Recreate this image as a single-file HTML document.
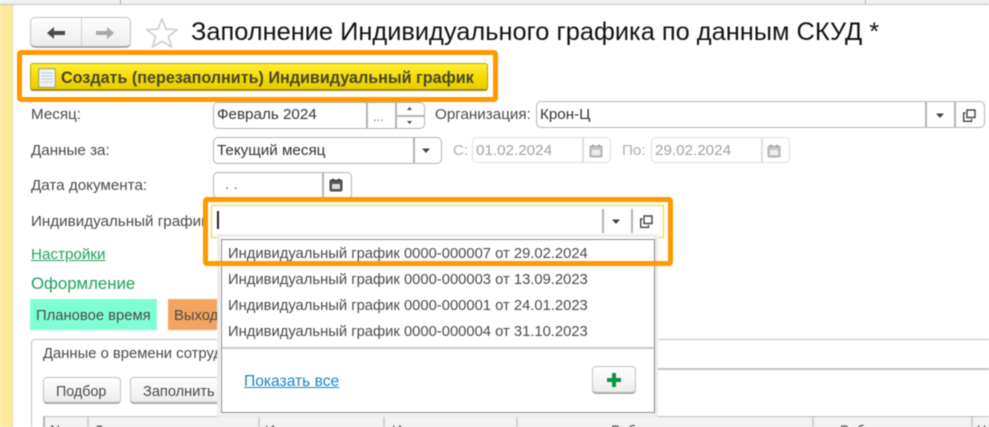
<!DOCTYPE html>
<html lang="ru"><head><meta charset="utf-8"><style>
html,body{margin:0;padding:0;background:#fff;overflow:hidden}
#p{position:relative;width:989px;height:427px;overflow:hidden;background:#fff;font-family:"Liberation Sans",sans-serif;font-size:15.2px;color:#4a4a4a;filter:blur(.45px)}
#p div,#p span.t,#p svg{position:absolute;box-sizing:border-box}
.t{white-space:nowrap;line-height:16px}
.f{border:1.5px solid #b4b4b4;border-radius:5px;background:#fff}
.d{border:1.5px solid #e0e0e0;border-radius:5px;background:#fff}
.v{width:1.5px;background:#b4b4b4}
.b{border:1.5px solid #c4c4c4;border-bottom:2px solid #aaa;border-radius:4px;background:linear-gradient(#fff,#ececec)}
.o{border:5px solid #ff9900;border-radius:4px}
.i{font-size:14.78px}
.h{color:#333;font-size:14px;top:5px}
</style></head><body><div id="p">
<div style="left:0;top:0;width:989px;height:5px;background:#f0f0f0;border-bottom:1.5px solid #c4c4c4"></div>
<div style="left:120px;top:0;width:1px;height:4px;background:#aaa"></div>
<div style="left:865px;top:0;width:1px;height:4px;background:#aaa"></div>
<div style="left:0;top:5px;width:13px;height:422px;background:#fbe99c;border-right:1.5px solid #e3d9a0"></div>

<div class="b" style="left:30px;top:17px;width:101px;height:31px;border-radius:5px"></div>
<div style="left:81px;top:18px;width:1px;height:28px;background:#d2d2d2"></div>
<svg style="left:46px;top:25px" width="20" height="16" viewBox="0 0 20 16"><path d="M1 8 L8 2 V6 H19 V10 H8 V14 Z" fill="#4b4b4b"/></svg>
<svg style="left:95px;top:25px" width="20" height="16" viewBox="0 0 20 16"><path d="M19 8 L12 2 V6 H1 V10 H12 V14 Z" fill="#a8a8a8"/></svg>
<svg style="left:146px;top:17px" width="32" height="32" viewBox="0 0 32 32"><path d="M16 2 L20 12 L31 12.6 L22.4 19.6 L25.4 30 L16 24.2 L6.6 30 L9.6 19.6 L1 12.6 L12 12 Z" fill="#fff" stroke="#c9ced3" stroke-width="1.6"/></svg>
<span class="t" style="left:191px;top:17px;font-size:25.4px;line-height:30px;color:#111">Заполнение Индивидуального графика по данным СКУД *</span>

<div class="o" style="left:17px;top:50px;width:481px;height:52px"></div>
<div style="left:30px;top:63px;width:458px;height:28px;border:1.5px solid #b3a200;border-bottom:2px solid #9c8d10;border-radius:3px;background:linear-gradient(#ffee33,#f5d800 60%,#e9cc00)"></div>
<svg style="left:38px;top:68px" width="18" height="20" viewBox="0 0 18 20"><rect x=".7" y=".7" width="16.6" height="18.6" fill="#eef3f8" stroke="#9b9b80"/><path d="M3 5H15M3 8H15M3 11H15M3 14H15" stroke="#c3ced8" stroke-width="1"/></svg>
<span class="t" style="left:61px;top:70px;font-size:16.15px;font-weight:bold;color:#46462a">Создать (перезаполнить) Индивидуальный график</span>

<span class="t" style="left:31px;top:107px">Месяц:</span>
<div class="f" style="left:213px;top:102px;width:212px;height:27px"></div>
<span class="t" style="left:217px;top:107px;color:#333">Февраль 2024</span>
<div class="v" style="left:366px;top:103px;height:25px"></div>
<div class="v" style="left:395px;top:103px;height:25px"></div>
<div style="left:396px;top:115px;width:28px;height:1.5px;background:#b4b4b4"></div>
<span class="t" style="left:373px;top:109px;font-size:13px;color:#777">...</span>
<svg style="left:405px;top:106px" width="9" height="20" viewBox="0 0 9 20"><path d="M4.5 1 L7 4 H2 Z M2 15 H7 L4.5 18 Z" fill="#444"/></svg>
<span class="t" style="left:435px;top:107px">Организация:</span>
<div class="f" style="left:536px;top:101px;width:449px;height:27px"></div>
<span class="t" style="left:540px;top:107px;color:#333">Крон-Ц</span>
<div class="v" style="left:925px;top:102px;height:25px"></div>
<div class="v" style="left:954px;top:102px;height:25px"></div>
<svg style="left:935px;top:113px" width="10" height="6" viewBox="0 0 10 6"><path d="M1 .5 H9 L5 5 Z" fill="#444"/></svg>
<svg style="left:962px;top:108px" width="15" height="15" viewBox="0 0 15 15"><path d="M5 2 H13 V9.5 H5 Z M3.5 5 H1.7 V13.3 H9.5 V11" fill="none" stroke="#444" stroke-width="1.4"/></svg>

<span class="t" style="left:31px;top:143px">Данные за:</span>
<div class="f" style="left:213px;top:137px;width:229px;height:27px"></div>
<span class="t" style="left:217px;top:143px;color:#333">Текущий месяц</span>
<div class="v" style="left:413px;top:138px;height:25px"></div>
<svg style="left:421px;top:148px" width="10" height="6" viewBox="0 0 10 6"><path d="M1 .5 H9 L5 5 Z" fill="#444"/></svg>
<span class="t" style="left:453px;top:143px;color:#b0b0b0">С:</span>
<div class="d" style="left:472px;top:137px;width:139px;height:26px"></div>
<span class="t" style="left:476px;top:143px;color:#a2a2a2">01.02.2024</span>
<div class="v" style="left:582px;top:138px;height:24px;background:#e0e0e0"></div>
<svg style="left:589px;top:144px" width="14" height="14" viewBox="0 0 14 14"><rect x="1" y="2" width="12" height="11" rx="1.5" fill="#c4c4c4" stroke="#aaa"/><rect x="3" y="6" width="8" height="5" fill="#eee"/><path d="M4 .5V3M10 .5V3" stroke="#999" stroke-width="1.4"/></svg>
<span class="t" style="left:622px;top:143px;color:#b0b0b0">По:</span>
<div class="d" style="left:651px;top:137px;width:139px;height:26px"></div>
<span class="t" style="left:655px;top:143px;color:#a2a2a2">29.02.2024</span>
<div class="v" style="left:761px;top:138px;height:24px;background:#e0e0e0"></div>
<svg style="left:767px;top:144px" width="14" height="14" viewBox="0 0 14 14"><rect x="1" y="2" width="12" height="11" rx="1.5" fill="#c4c4c4" stroke="#aaa"/><rect x="3" y="6" width="8" height="5" fill="#eee"/><path d="M4 .5V3M10 .5V3" stroke="#999" stroke-width="1.4"/></svg>

<span class="t" style="left:31px;top:178px">Дата документа:</span>
<div class="f" style="left:213px;top:172px;width:139px;height:27px"></div>
<span class="t" style="left:225px;top:177px;color:#666">. .</span>
<div class="v" style="left:322px;top:173px;height:25px"></div>
<svg style="left:329px;top:178px" width="14" height="14" viewBox="0 0 14 14"><rect x="1" y="2" width="12" height="11" rx="1.5" fill="#555" stroke="#444"/><rect x="3" y="6" width="8" height="5" fill="#ddd"/><path d="M4 .5V3M10 .5V3" stroke="#333" stroke-width="1.4"/></svg>

<span class="t" style="left:31px;top:214px">Индивидуальный график:</span>
<div style="left:203px;top:197px;width:470px;height:69px;background:#fff"></div>
<div style="left:211px;top:205px;width:453px;height:33px;border:1.5px solid #ffcc22"></div>
<div style="left:217px;top:211px;width:1.5px;height:18px;background:#222"></div>
<div class="v" style="left:602px;top:209px;height:24px"></div>
<div class="v" style="left:631px;top:209px;height:24px"></div>
<svg style="left:611px;top:219px" width="10" height="6" viewBox="0 0 10 6"><path d="M1 .5 H9 L5 5 Z" fill="#444"/></svg>
<svg style="left:639px;top:214px" width="15" height="15" viewBox="0 0 15 15"><path d="M5 2 H13 V9.5 H5 Z M3.5 5 H1.7 V13.3 H9.5 V11" fill="none" stroke="#444" stroke-width="1.4"/></svg>

<span class="t" style="left:31px;top:247px;color:#1ba35a;text-decoration:underline">Настройки</span>
<span class="t" style="left:31px;top:275px;font-size:16.8px;line-height:18px;color:#1ba35a">Оформление</span>
<div style="left:30px;top:299px;width:127px;height:31px;background:#7fffd4"></div>
<span class="t" style="left:36px;top:308px;font-size:14.8px">Плановое время</span>
<div style="left:168px;top:299px;width:60px;height:31px;background:#f4a460"></div>
<span class="t" style="left:174px;top:308px;font-size:14.8px">Выходной</span>

<div style="left:31px;top:339px;width:958px;height:88px;border:1.5px solid #c4c4c4;border-width:1.5px 0 0 1.5px;border-top-left-radius:4px"></div>
<span class="t" style="left:43px;top:346px;font-size:14.8px">Данные о времени сотрудников</span>
<div style="left:320px;top:368px;width:669px;height:1.5px;background:#c4c4c4"></div>
<div class="b" style="left:43px;top:377px;width:78px;height:27px"></div>
<span class="t" style="left:56px;top:384px;font-size:14.3px">Подбор</span>
<div class="b" style="left:130px;top:377px;width:120px;height:27px"></div>
<span class="t" style="left:143px;top:384px;font-size:14.6px">Заполнить</span>

<div style="left:43px;top:416px;width:946px;height:11px;background:#f2f2f2;border-top:1.5px solid #c0c0c0;overflow:hidden">
<div class="v" style="left:0;top:0;height:10px"></div>
<div class="v" style="left:44px;top:0;height:10px;background:#d0d0d0"></div>
<div class="v" style="left:215px;top:0;height:10px;background:#d0d0d0"></div>
<div class="v" style="left:340px;top:0;height:10px;background:#d0d0d0"></div>
<div class="v" style="left:473px;top:0;height:10px;background:#d0d0d0"></div>
<div class="v" style="left:769px;top:0;height:10px;background:#d0d0d0"></div>
<div class="v" style="left:928px;top:0;height:10px;background:#d0d0d0"></div>
<span class="t h" style="left:7px">№</span>
<span class="t h" style="left:51px">Сотрудник</span>
<span class="t h" style="left:222px">Интервал</span>
<span class="t h" style="left:349px">Интервал</span>
<span class="t h" style="left:568px">Рабочее</span>
<span class="t h" style="left:797px">Рабочее</span>
<span class="t h" style="left:934px">Ч</span>
</div>

<div style="left:217px;top:234px;width:441px;height:183px;background:#fff;border:3px solid #ececec;border-right-width:4px"></div>
<div style="left:221px;top:239px;width:434px;height:174px;background:#fff;border:1.5px solid #8a8a8a"></div>
<span class="t i" style="left:228px;top:246px">Индивидуальный график 0000-000007 от 29.02.2024</span>
<span class="t i" style="left:228px;top:272px">Индивидуальный график 0000-000003 от 13.09.2023</span>
<span class="t i" style="left:228px;top:298px">Индивидуальный график 0000-000001 от 24.01.2023</span>
<span class="t i" style="left:228px;top:324px">Индивидуальный график 0000-000004 от 31.10.2023</span>
<div style="left:222px;top:347px;width:432px;height:1.5px;background:#c8c8c8"></div>
<span class="t" style="left:244px;top:374px;font-size:15.6px;color:#1c84c6;text-decoration:underline">Показать все</span>
<div class="b" style="left:592px;top:366px;width:44px;height:28px"></div>
<svg style="left:606px;top:372px" width="16" height="16" viewBox="0 0 16 16"><path d="M6 1H10V6H15V10H10V15H6V10H1V6H6Z" fill="#0a9440"/></svg>

<div class="o" style="left:203px;top:197px;width:470px;height:69px;background:transparent"></div>
</div></body></html>
